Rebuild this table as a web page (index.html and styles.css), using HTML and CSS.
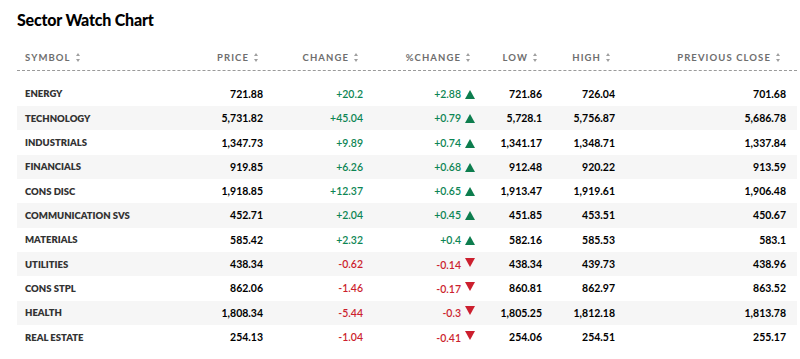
FILE: index.html
```html
<!DOCTYPE html>
<html>
<head>
<meta charset="utf-8">
<link rel="stylesheet" href="styles.css">
</head>
<body>
<div class="wrap">
  <h1 class="title">Sector Watch Chart</h1>
  <div class="table">
    <div class="row head">
      <div class="c sym">SYMBOL<span class="sort"></span></div>
      <div class="c num">PRICE<span class="sort"></span></div>
      <div class="c num">CHANGE<span class="sort"></span></div>
      <div class="c num">%CHANGE<span class="sort"></span></div>
      <div class="c num">LOW<span class="sort"></span></div>
      <div class="c num">HIGH<span class="sort"></span></div>
      <div class="c num last">PREVIOUS CLOSE<span class="sort"></span></div>
    </div>
    <div class="body">
      <div class="row"><div class="c sym">ENERGY</div><div class="c num">721.88</div><div class="c num up">+20.2</div><div class="c num up pct">+2.88<span class="tri-up"></span></div><div class="c num">721.86</div><div class="c num">726.04</div><div class="c num last">701.68</div></div>
      <div class="row"><div class="c sym">TECHNOLOGY</div><div class="c num">5,731.82</div><div class="c num up">+45.04</div><div class="c num up pct">+0.79<span class="tri-up"></span></div><div class="c num">5,728.1</div><div class="c num">5,756.87</div><div class="c num last">5,686.78</div></div>
      <div class="row"><div class="c sym">INDUSTRIALS</div><div class="c num">1,347.73</div><div class="c num up">+9.89</div><div class="c num up pct">+0.74<span class="tri-up"></span></div><div class="c num">1,341.17</div><div class="c num">1,348.71</div><div class="c num last">1,337.84</div></div>
      <div class="row"><div class="c sym">FINANCIALS</div><div class="c num">919.85</div><div class="c num up">+6.26</div><div class="c num up pct">+0.68<span class="tri-up"></span></div><div class="c num">912.48</div><div class="c num">920.22</div><div class="c num last">913.59</div></div>
      <div class="row"><div class="c sym">CONS DISC</div><div class="c num">1,918.85</div><div class="c num up">+12.37</div><div class="c num up pct">+0.65<span class="tri-up"></span></div><div class="c num">1,913.47</div><div class="c num">1,919.61</div><div class="c num last">1,906.48</div></div>
      <div class="row"><div class="c sym">COMMUNICATION SVS</div><div class="c num">452.71</div><div class="c num up">+2.04</div><div class="c num up pct">+0.45<span class="tri-up"></span></div><div class="c num">451.85</div><div class="c num">453.51</div><div class="c num last">450.67</div></div>
      <div class="row"><div class="c sym">MATERIALS</div><div class="c num">585.42</div><div class="c num up">+2.32</div><div class="c num up pct">+0.4<span class="tri-up"></span></div><div class="c num">582.16</div><div class="c num">585.53</div><div class="c num last">583.1</div></div>
      <div class="row"><div class="c sym">UTILITIES</div><div class="c num">438.34</div><div class="c num down">-0.62</div><div class="c num down pct">-0.14<span class="tri-down"></span></div><div class="c num">438.34</div><div class="c num">439.73</div><div class="c num last">438.96</div></div>
      <div class="row"><div class="c sym">CONS STPL</div><div class="c num">862.06</div><div class="c num down">-1.46</div><div class="c num down pct">-0.17<span class="tri-down"></span></div><div class="c num">860.81</div><div class="c num">862.97</div><div class="c num last">863.52</div></div>
      <div class="row"><div class="c sym">HEALTH</div><div class="c num">1,808.34</div><div class="c num down">-5.44</div><div class="c num down pct">-0.3<span class="tri-down"></span></div><div class="c num">1,805.25</div><div class="c num">1,812.18</div><div class="c num last">1,813.78</div></div>
      <div class="row"><div class="c sym">REAL ESTATE</div><div class="c num">254.13</div><div class="c num down">-1.04</div><div class="c num down pct">-0.41<span class="tri-down"></span></div><div class="c num">254.06</div><div class="c num">254.51</div><div class="c num last">255.17</div></div>
    </div>
  </div>
</div>
</body>
</html>
```
FILE: styles.css
```css
html, body {
  margin: 0;
  padding: 0;
  background: #fff;
}
body {
  font-family: Lato, "Liberation Sans", sans-serif;
  color: #000;
}
.wrap {
  padding: 10px 3px 0 17px;
}
.title {
  margin: 0;
  font-size: 16px;
  line-height: 20px;
  font-weight: 900;
  letter-spacing: -0.2px;
  color: #000;
}
.table {
  width: 780px;
}
.row {
  display: grid;
  grid-template-columns: 173px 81px 100px 112px 67px 73px 174px;
  height: 24.33px;
  align-items: center;
}
.head {
  margin-top: 14px;
  height: 26px;
  border-bottom: 1px dashed #9a9a9a;
  font-size: 9.5px;
  font-weight: 700;
  letter-spacing: 1.1px;
  color: #6e6e6e;
}
.body {
  padding-top: 10.7px;
}
.body .row:nth-child(even) {
  background: #f6f6f6;
}
.c {
  white-space: nowrap;
}
.sym {
  padding-left: 8px;
  font-size: 9.5px;
  font-weight: 800;
  color: #333;
}
.head .sym {
  font-size: 9.5px;
  font-weight: 700;
  color: #6e6e6e;
}
.num {
  text-align: right;
  padding-right: 8px;
  font-size: 10.5px;
  font-weight: 700;
}
.head .num {
  font-size: 9.5px;
  padding-right: 12px;
}
.head .last {
  padding-right: 16px;
}
.last {
  padding-right: 11px;
}
.up {
  color: #0d8554;
  font-weight: 600;
}
.down {
  color: #cc1f2e;
  font-weight: 600;
}
.sort {
  display: inline-block;
  position: relative;
  width: 5px;
  height: 9px;
  margin-left: 5px;
  vertical-align: -1px;
}
.sort::before, .sort::after {
  content: "";
  position: absolute;
  left: 0;
  border-left: 2.5px solid transparent;
  border-right: 2.5px solid transparent;
}
.sort::before {
  top: 0;
  border-bottom: 3px solid #a0a0a0;
}
.sort::after {
  bottom: 0;
  border-top: 3px solid #a0a0a0;
}
.tri-up, .tri-down {
  display: inline-block;
  width: 0;
  height: 0;
  margin-left: 4px;
  border-left: 5px solid transparent;
  border-right: 5px solid transparent;
}
.tri-up {
  border-bottom: 9px solid #0d7d4e;
  vertical-align: -1px;
}
.tri-down {
  border-top: 9px solid #cc1f2e;
  vertical-align: 2px;
}
```
